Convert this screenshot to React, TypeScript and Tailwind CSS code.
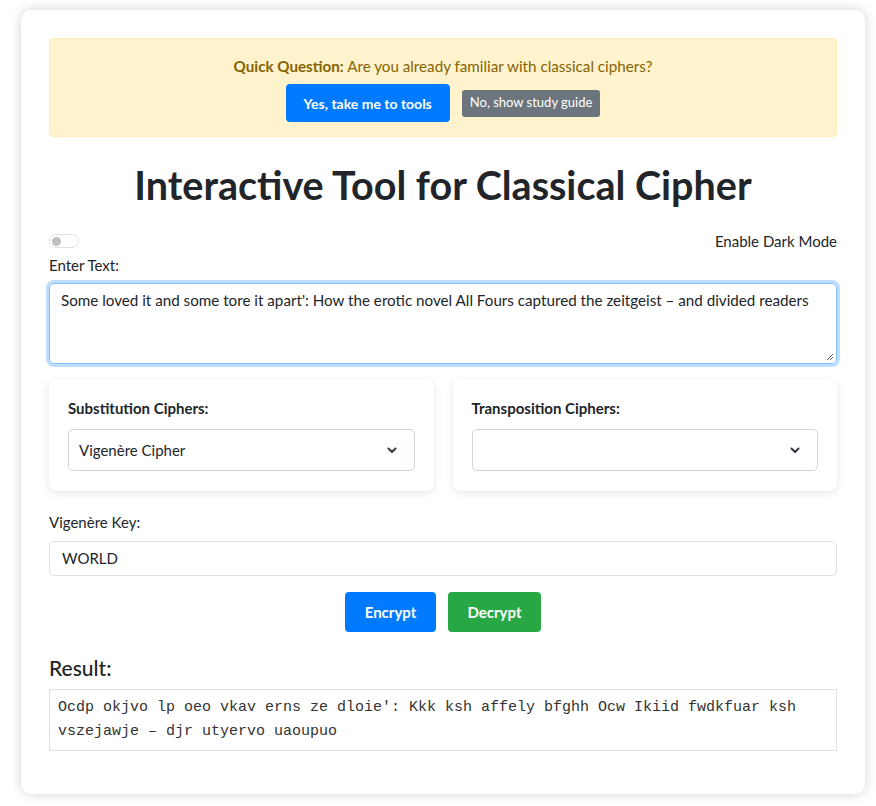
import React from "react";

const Chevron = () => (
  <svg width="16" height="16" viewBox="0 0 16 16" fill="none" stroke="#343a40" strokeWidth="2" strokeLinecap="round" strokeLinejoin="round">
    <path d="M4.5 6.5l3.5 3.5 3.5-3.5" />
  </svg>
);

export default function App() {
  return (
    <div className="min-h-[806px] bg-white pt-[10px] pl-[21px] pr-[11px] pb-[12px]" style={{ fontFamily: 'Lato, sans-serif' }}>
      <div className="bg-white rounded-[10px] shadow-[0_0_12px_rgba(0,0,0,0.18)] px-[28px] pt-[28px] pb-[43px] text-[#212529]">
        <div className="bg-[#fff3cd] border border-[#ffeeba] rounded-[4px] h-[99px] flex flex-col items-center pt-[16px]">
          <div className="text-[15.2px] leading-[22px] text-[#856404]">
            <span className="font-bold">Quick Question:</span> Are you already familiar with classical ciphers?
          </div>
          <div className="flex items-center gap-[12px] mt-[7px]">
            <button className="bg-[#007bff] text-white font-bold text-[14px] h-[38px] px-[18px] rounded-[4px]">Yes, take me to tools</button>
            <button className="bg-[#6c757d] text-white text-[13px] h-[27px] px-[8px] rounded-[3px]">No, show study guide</button>
          </div>
        </div>

        <h1 className="text-center font-bold text-[39.5px] leading-[48px] mt-[24px] text-[#212529]">Interactive Tool for Classical Cipher</h1>

        <div className="flex items-center justify-between mt-[24px] h-[16px]">
          <div className="w-[30px] h-[14px] rounded-full border border-[#dee2e6] bg-white flex items-center px-[2px]">
            <div className="w-[9px] h-[9px] rounded-full bg-[#bfbfbf]" />
          </div>
          <div className="text-[15px]">Enable Dark Mode</div>
        </div>

        <div className="text-[15px] leading-[20px] mt-[6px]">Enter Text:</div>
        <div className="mt-[8px] h-[81px] rounded-[5px] border border-[#80bdff] shadow-[0_0_0_3px_rgba(0,123,255,0.25)] px-[11px] pt-[5px] text-[15.2px] leading-[22px] relative">
          Some loved it and some tore it apart': How the erotic novel All Fours captured the zeitgeist – and divided readers
          <svg className="absolute right-[2px] bottom-[2px]" width="9" height="9" viewBox="0 0 9 9" stroke="#555" strokeWidth="1">
            <path d="M8 2L2 8M8 5L5 8" />
          </svg>
        </div>

        <div className="grid grid-cols-2 gap-[19px] mt-[15px]">
          {[
            { label: "Substitution Ciphers:", value: "Vigenère Cipher" },
            { label: "Transposition Ciphers:", value: "" },
          ].map((c) => (
            <div key={c.label} className="bg-white rounded-[8px] shadow-[0_2px_8px_rgba(0,0,0,0.1)] h-[112px] px-[19px] pt-[19px]">
              <div className="font-bold text-[15px] leading-[20px]">{c.label}</div>
              <div className="mt-[11px] h-[42px] border border-[#ced4da] rounded-[5px] flex items-center justify-between pl-[10px] pr-[14px] text-[15px]">
                <span>{c.value}</span>
                <Chevron />
              </div>
            </div>
          ))}
        </div>

        <div className="text-[15px] leading-[20px] mt-[21px]">Vigenère Key:</div>
        <div className="mt-[9px] h-[35px] border border-[#dee2e6] rounded-[5px] flex items-center px-[12px] text-[15px]">WORLD</div>

        <div className="flex justify-center gap-[12px] mt-[16px]">
          <button className="bg-[#007bff] text-white font-bold text-[15px] h-[40px] w-[91px] rounded-[4px]">Encrypt</button>
          <button className="bg-[#28a745] text-white font-bold text-[15px] h-[40px] w-[93px] rounded-[4px]">Decrypt</button>
        </div>

        <div className="text-[21px] font-medium leading-[28px] mt-[22px]">Result:</div>
        <div className="mt-[7px] border border-[#dee2e6] px-[8px] py-[6px] text-[15px] leading-[24px] text-[#333]" style={{ fontFamily: '"Liberation Mono", monospace' }}>
          Ocdp okjvo lp oeo vkav erns ze dloie': Kkk ksh affely bfghh Ocw Ikiid fwdkfuar ksh vszejawje – djr utyervo uaoupuo
        </div>
      </div>
    </div>
  );
}
